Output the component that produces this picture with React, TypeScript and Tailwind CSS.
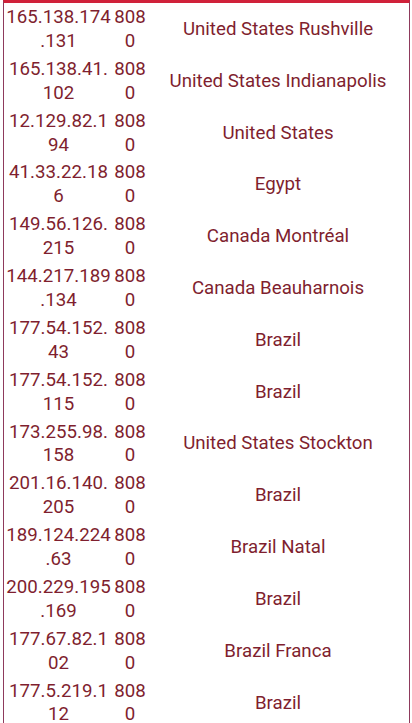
import React from "react";

const rows: [string, string, string][] = [
  ["165.138.174", ".131", "United States Rushville"],
  ["165.138.41.", "102", "United States Indianapolis"],
  ["12.129.82.1", "94", "United States"],
  ["41.33.22.18", "6", "Egypt"],
  ["149.56.126.", "215", "Canada Montréal"],
  ["144.217.189", ".134", "Canada Beauharnois"],
  ["177.54.152.", "43", "Brazil"],
  ["177.54.152.", "115", "Brazil"],
  ["173.255.98.", "158", "United States Stockton"],
  ["201.16.140.", "205", "Brazil"],
  ["189.124.224", ".63", "Brazil Natal"],
  ["200.229.195", ".169", "Brazil"],
  ["177.67.82.1", "02", "Brazil Franca"],
  ["177.5.219.1", "12", "Brazil"],
];

export default function App() {
  return (
    <div className="w-[412px] h-[723px] overflow-hidden bg-white" style={{ fontFamily: "Roboto, 'Noto Sans', sans-serif" }}>
      <div className="ml-[3px] w-[407px] pt-[1px] border-t-[3px] border-t-[#d0213a] border-x-[1.5px] border-x-[#8e3a5c] text-[#7f1f2f] text-[18.7px] leading-[23.9px]">
        {rows.map(([ip1, ip2, country], i) => (
          <div key={i} className="grid grid-cols-[109px_34px_1fr] py-[2px]">
            <div className="flex flex-col items-center whitespace-nowrap">
              <span>{ip1}</span>
              <span>{ip2}</span>
            </div>
            <div className="flex flex-col items-center whitespace-nowrap">
              <span>808</span>
              <span>0</span>
            </div>
            <div className="flex items-center justify-center text-center whitespace-nowrap">{country}</div>
          </div>
        ))}
      </div>
    </div>
  );
}
